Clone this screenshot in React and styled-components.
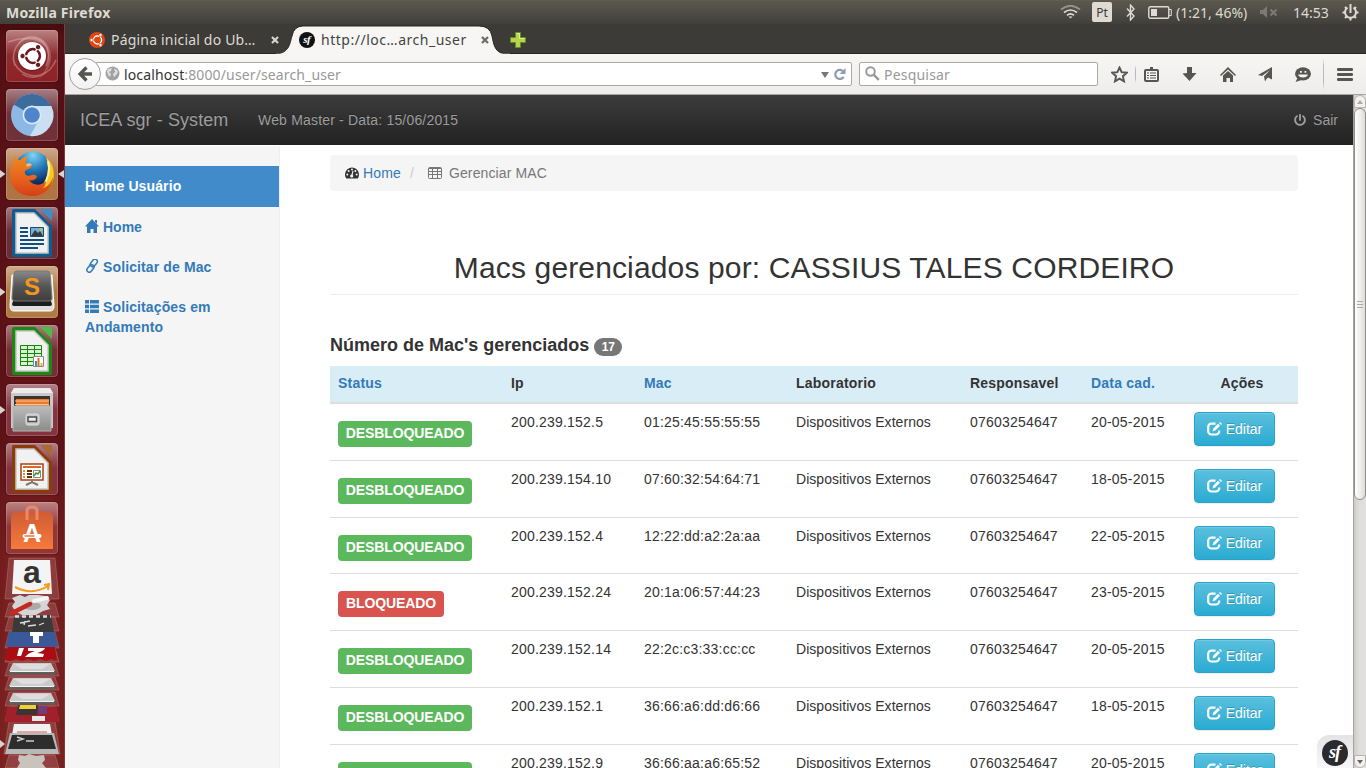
import React from "react";
import styled, { createGlobalStyle } from "styled-components";
import { FaPowerOff } from "react-icons/fa";

const GlobalStyle = createGlobalStyle`
  * { box-sizing: border-box; }
  body { margin: 0; overflow: hidden; background: #fff; }
`;

const uiFont = `"Noto Sans", "Open Sans", sans-serif`;
const pageFont = `"Liberation Sans", Arial, sans-serif`;

const Desktop = styled.div`
  width: 1366px;
  height: 768px;
  overflow: hidden;
  display: flex;
  flex-direction: column;
  font-family: ${uiFont};
`;
const Label = styled.span`
  letter-spacing: ${(p) => p.$ls || 0}px;
  white-space: nowrap;
`;

/* ---------- top panel ---------- */
const Panel = styled.header`
  flex: none;
  height: 24px;
  display: flex;
  align-items: center;
  padding: 0 7px 0 6px;
  color: #dfdbd2;
  font-size: 14px;
  background: linear-gradient(#65624f 0, #5a584e 1px, #504e46 11px, #403f3a 24px);
  svg { flex: none; display: block; }
`;
const PanelTitle = styled.div`
  flex: 1;
  font-weight: 700;
  font-size: 14px;
`;
const Lang = styled.div`
  width: 20px;
  height: 20px;
  margin: 0 14px 0 11px;
  border-radius: 2px;
  background: #dfdbd2;
  color: #3c3b37;
  font-size: 12px;
  line-height: 21px;
  text-align: center;
`;
const Battery = styled.div`
  display: flex;
  align-items: center;
  gap: 4px;
  width: 101px;
  margin: 0 11px 0 13px;
`;
const Clock = styled.div`
  width: 36px;
  margin: 0 13px 0 15px;
`;

/* ---------- launcher ---------- */
const Body = styled.div`
  flex: 1;
  min-height: 0;
  display: flex;
`;
const Launcher = styled.nav`
  flex: none;
  width: 65px;
  height: 744px;
  overflow: hidden;
  display: flex;
  flex-direction: column;
  gap: 7px;
  padding-top: 6px;
  border-right: 1px solid #823c40;
  background: linear-gradient(90deg, rgba(40, 0, 0, .12), transparent 20%, transparent 80%, rgba(40, 0, 0, .15)),
    linear-gradient(#4a0b0f 0, #5b1116 14px, #5d1218 120px, #641419 420px, #7d2020 540px, #842524 744px);
`;
const Slot = styled.div`
  flex: none;
  display: flex;
  align-items: center;
  justify-content: space-between;
  height: 52px;
`;
const Pip = styled.i`
  width: 6px;
  height: 8px;
  background: ${(p) => (p.$on ? "#d8d4d2" : "transparent")};
  clip-path: ${(p) => (p.$right ? "polygon(100% 0, 0 50%, 100% 100%)" : "polygon(0 0, 90% 50%, 0 100%)")};
`;
const Tile = styled.div`
  width: 52px;
  height: 52px;
  border-radius: 4px;
  background: linear-gradient(rgba(255, 255, 255, .38), rgba(255, 255, 255, 0) 48%), ${(p) => p.$bg};
  box-shadow: inset 0 0 0 1px rgba(255, 255, 255, .18), 0 0 2px rgba(0, 0, 0, .5);
  svg { display: block; }
`;
const Folded = styled.div`
  flex: none;
  margin-top: -5px;
  svg { display: block; overflow: visible; }
`;

/* ---------- firefox ---------- */
const Browser = styled.div`
  flex: 1;
  min-width: 0;
  display: flex;
  flex-direction: column;
`;
const TabStrip = styled.div`
  flex: none;
  height: 30px;
  display: flex;
  background: #3c3b37;
  border-bottom: 1px solid #282723;
  font-size: 14px;
`;
const Tab = styled.div`
  position: relative;
  z-index: ${(p) => (p.$active ? 1 : 0)};
  display: flex;
  align-items: center;
  width: ${(p) => (p.$active ? "208px" : "217px")};
  height: 32px;
  padding-left: ${(p) => (p.$active ? "17px" : "24px")};
  color: ${(p) => (p.$active ? "#45443f" : "#dddad3")};
`;
const TabShape = styled.svg`
  position: absolute;
  left: -6px;
  top: 0;
  z-index: -1;
`;
const TabText = styled.div`
  width: ${(p) => p.$w}px;
  margin: -1px ${(p) => p.$gap}px 0 6px;
  white-space: nowrap;
`;
const NewTab = styled.div`
  padding: 8px 0 0 20px;
`;
const Toolbar = styled.div`
  flex: none;
  height: 41px;
  display: flex;
  align-items: center;
  padding-left: 4px;
  background: linear-gradient(#f7f6f5, #efedeb);
  border-bottom: 1px solid #a8a5a0;
  color: #999;
  font-size: 14px;
  svg { flex: none; display: block; }
`;
const BackButton = styled.div`
  flex: none;
  z-index: 1;
  display: grid;
  place-items: center;
  width: 32px;
  height: 32px;
  border: 1px solid #9aa0a8;
  border-radius: 50%;
  background: linear-gradient(#fff, #f3f2f1);
`;
const Field = styled.div`
  flex: none;
  display: flex;
  align-items: center;
  width: ${(p) => p.$w}px;
  height: 24px;
  margin-left: ${(p) => p.$ml}px;
  padding: 0 ${(p) => p.$pr || 0}px 1px ${(p) => p.$pl}px;
  border: 1px solid #aaa8a3;
  border-radius: 2px;
  background: #fff;
`;
const Address = styled.div`
  flex: 1;
  margin: 2px 0 0 4px;
  b { font-weight: 400; color: #333; }
`;
const Tools = styled.div`
  display: flex;
  align-items: center;
  padding-left: 13px;
`;
const Divider = styled.i`
  width: 1px;
  height: ${(p) => p.$h}px;
  margin: 0 ${(p) => p.$r}px 0 ${(p) => p.$l}px;
  background: linear-gradient(transparent, #b3bac2 25%, #b3bac2 75%, transparent);
`;

/* ---------- web page ---------- */
const Viewport = styled.div`
  flex: 1;
  min-height: 0;
  display: flex;
`;
const Page = styled.div`
  width: 1288px;
  height: 673px;
  overflow: hidden;
  position: relative;
  display: flex;
  flex-direction: column;
  background: #fff;
  color: #333;
  font: 14px/20px ${pageFont};
`;
const Navbar = styled.div`
  flex: none;
  height: 50px;
  display: flex;
  align-items: center;
  padding: 0 15px;
  color: #9d9d9d;
  background: linear-gradient(#3c3c3c, #222);
  text-shadow: 0 -1px 0 rgba(0, 0, 0, .25);
`;
const Brand = styled.div`
  width: 178px;
  font-size: 18px;
  white-space: nowrap;
`;
const NavText = styled.div`
  flex: 1;
`;
const Logout = styled.div`
  display: flex;
  align-items: center;
  gap: 7px;
`;
const Columns = styled.div`
  flex: 1;
  min-height: 0;
  display: flex;
`;
const Sidebar = styled.aside`
  flex: none;
  width: 215px;
  margin-top: 1px;
  padding-top: 20px;
  background: #f5f5f5;
  border-right: 1px solid #eee;
`;
const SideItem = styled.div`
  padding: ${(p) => (p.$active ? "10px 20px 11px" : "10px 20px")};
  font-weight: 700;
  letter-spacing: ${(p) => p.$ls ?? 0.12}px;
  color: ${(p) => (p.$active ? "#fff" : "#337ab7")};
  background: ${(p) => (p.$active ? "#428bca" : "transparent")};
  svg { vertical-align: -1px; margin-right: 4px; }
  span { letter-spacing: inherit; }
`;
const Main = styled.main`
  flex: none;
  width: 968px;
  margin-left: 50px;
  padding-top: 10px;
`;
const Breadcrumb = styled.div`
  display: flex;
  align-items: center;
  height: 36px;
  padding: 0 15px;
  border-radius: 4px;
  background: #f5f5f5;
  color: #777;
  letter-spacing: .13px;
  a { color: #337ab7; margin-left: 4px; }
  i { color: #ccc; font-style: normal; margin: 0 14px 0 9px; }
  svg + span { margin-left: 7px; }
`;
const Title = styled.h2`
  margin: 58px 0 0;
  height: 46px;
  padding-top: 2px;
  border-bottom: 1px solid #eee;
  font-size: 30px;
  font-weight: 400;
  line-height: 33px;
  text-align: center;
  white-space: nowrap;
`;
const Subtitle = styled.h4`
  display: flex;
  align-items: center;
  height: 20px;
  margin: 40px 0 11px;
  font-size: 18px;
  line-height: 20px;
`;
const Count = styled.span`
  width: 28px;
  height: 18px;
  margin: 4px 0 0 5px;
  border-radius: 9px;
  background: #777;
  color: #fff;
  font-size: 12px;
  line-height: 18px;
  text-align: center;
`;
const Row = styled.div`
  display: grid;
  grid-template-columns: 173px 133px 152px 174px 121px 103px 112px;
  height: ${(p) => (p.$first ? 56.8 : 56.75)}px;
  padding-top: 8px;
  border-bottom: 1px solid #ddd;
`;
const HeadRow = styled(Row)`
  height: 38px;
  padding-top: 7px;
  background: #d9edf7;
  border-bottom: 2px solid #ddd;
  font-weight: 700;
`;
const Cell = styled.div`
  padding: 0 8px;
  white-space: nowrap;
  letter-spacing: ${(p) => p.$ls ?? 0.2}px;
  text-align: ${(p) => (p.$center ? "center" : "left")};
  color: ${(p) => (p.$link ? "#337ab7" : "#333")};
`;
const Status = styled.span`
  display: block;
  width: ${(p) => (p.$blocked ? 106 : 134)}px;
  height: 26px;
  margin-top: 9px;
  border-radius: 4px;
  background: ${(p) => (p.$blocked ? "#d9534f" : "#5cb85c")};
  color: #fff;
  font-weight: 700;
  letter-spacing: -.12px;
  line-height: 24px;
  text-align: center;
`;
const EditButton = styled.span`
  display: flex;
  align-items: center;
  justify-content: center;
  gap: 4px;
  width: 81px;
  height: 34px;
  border: 1px solid #28a4c9;
  border-radius: 4px;
  background: linear-gradient(#5bc0de, #2aabd2);
  box-shadow: inset 0 1px 0 rgba(255, 255, 255, .15), 0 1px 1px rgba(0, 0, 0, .075);
  color: #fff;
  text-shadow: 0 -1px 0 rgba(0, 0, 0, .2);
`;
const DebugBadge = styled.div`
  position: absolute;
  right: 0;
  bottom: 0;
  width: 36px;
  height: 33px;
  padding: 5px 0 0 5px;
  border-radius: 12px 0 0 0;
  background: linear-gradient(#e4e4e4, #f7f7f7);
  svg { display: block; }
`;
const Scrollbar = styled.div`
  flex: none;
  width: 13px;
  height: 673px;
  display: flex;
  flex-direction: column;
  background: linear-gradient(90deg, #cdcbc9, #dedddb 40%, #e2e0de);
  border-left: 1px solid #a6a39f;
`;
const Arrow = styled.div`
  display: grid;
  place-items: center;
  height: 13px;
  border: 1px solid #b8b5b1;
  border-radius: ${(p) => (p.$down ? "0 0 6px 6px" : "6px 6px 0 0")};
  background: #f2f1f0;
`;
const Thumb = styled.div`
  display: grid;
  place-items: center;
  height: 392px;
  border: 1px solid #918e8a;
  border-radius: 6px;
  background: linear-gradient(90deg, #fff, #f0efee 50%, #dedcda);
`;
const Trough = styled.div`
  flex: 1;
`;

/* ---------- drawings ---------- */
const Ubuntu = ({ size, color, ring, cut }) => (
  <svg width={size} height={size} viewBox="0 0 24 24">
    <circle cx="12" cy="12" r="12" fill={color} />
    <circle cx="12.800" cy="12" r="5.900" fill="none" stroke={ring} strokeWidth="2.300" />
    <path d="M12.800 12H2M12.800 12l5.500 9.500M12.800 12l5.500-9.500" stroke={color} strokeWidth="1.200" />
    <circle cx="12.800" cy="12" r="4.700" fill={color} />
    {[[3.9, 12], [17.2, 19.6], [17.2, 4.4]].map(([x, y]) => (
      <circle key={x + "-" + y} cx={x} cy={y} r="2.300" fill={ring} stroke={cut} strokeWidth=".8" />
    ))}
  </svg>
);
const Symfony = ({ size, fill }) => (
  <svg width={size} height={size} viewBox="0 0 26 26">
    <circle cx="13" cy="13" r="13" fill={fill} />
    <text x="12.600" y="18" textAnchor="middle" fill="#fff" fontFamily="Liberation Serif, serif" fontStyle="italic" fontWeight="700" fontSize="18" letterSpacing="-1">sf</text>
  </svg>
);
const Close = ({ color }) => (
  <svg width="8" height="8" viewBox="0 0 8 8"><path d="M1 1l6 6M7 1L1 7" stroke={color} strokeWidth="2.200" /></svg>
);

const DashTile = () => (
  <svg width="52" height="52" viewBox="0 0 52 52">
    <path d="M12 14C17 2 38 2 44 20C48 34 40 44 30 51C44 40 46 22 36 12C28 6 18 8 12 14z" fill="#fff" opacity=".2" />
    <path d="M9 36C4 22 12 8 26 8C40 8 46 22 40 36M2 12C14 8 30 6 40 16M40 42C28 50 10 44 7 28M16 44c12 8 28 0 34-14" fill="none" stroke="#f3c9c9" strokeOpacity=".38" strokeWidth="1.500" />
    <circle cx="26" cy="26.500" r="15" fill="#3a0a0d" opacity=".3" />
    <g transform="translate(12 12)"><Ubuntu size={28} color="#fff" ring="#681a20" cut="#fff" /></g>
  </svg>
);
const ChromiumTile = () => (
  <svg width="52" height="52" viewBox="0 0 52 52">
    <circle cx="26" cy="26" r="21" fill="#8bb8e4" />
    <path d="M26 26L7.800 15.500A21 21 0 0 1 44.200 15.500L45.500 18H26z" fill="#3c6c9c" />
    <path d="M26 17h19.300A21 21 0 0 1 24 47l9.500-17z" fill="#cbdff3" />
    <circle cx="26" cy="26" r="9.500" fill="#dbe9f8" />
    <circle cx="26" cy="26" r="7.800" fill="#4f86cb" />
  </svg>
);
const FirefoxTile = () => (
  <svg width="52" height="52" viewBox="0 0 52 52">
    <defs>
      <radialGradient id="ffBlue" cx=".5" cy=".1" r=".8"><stop offset="0" stopColor="#7fd4f5" /><stop offset=".5" stopColor="#2379b8" /><stop offset="1" stopColor="#0a2458" /></radialGradient>
      <linearGradient id="ffFox" x1="0" y1="0" x2="0" y2="1"><stop offset="0" stopColor="#ee8a1d" /><stop offset=".6" stopColor="#e5601f" /><stop offset="1" stopColor="#d53f14" /></linearGradient>
    </defs>
    <circle cx="27" cy="22" r="18.500" fill="url(#ffBlue)" />
    <path d="M40 9C50 18 51 34 40 43L32 44C42 34 44 22 40 9z" fill="#f7c821" />
    <path d="M42 13c3 10-1 18-4 24" fill="none" stroke="#fff09a" strokeWidth="2" />
    <path d="M9 8C10 10 12 12 14 12C17 9 20 8 22 9C20 11 19 13 20 16C22 16 25 16 26 17C26 20 21 21 19 23C18 27 22 29 26 27C29 26 31 28 31 29C29 32 26 33 23 32C27 38 35 38 40 33C40 37 38 39 37 40C42 39 45 34 47 29C47 40 38 48 26 48C13 48 4 39 4 27C4 20 7 16 9 8z" fill="url(#ffFox)" />
    <path d="M20 16c2-1 5-1 6 1l-5 2z" fill="#f1b58c" />
  </svg>
);
const docColors = {
  writer: ["#0f5c90", "#3f8fc4"],
  calc: ["#1c8a12", "#4fb944"],
  impress: ["#8a3d0a", "#a86a36"],
};
const DocTile = ({ kind }) => (
  <svg width="52" height="52" viewBox="0 0 52 52">
    <path d="M6 4a2 2 0 0 1 2-2h21l17 17v29a2 2 0 0 1-2 2H8a2 2 0 0 1-2-2z" fill={docColors[kind][0]} />
    <path d="M10 6h18l14 14v26H10z" fill="#f2f1f1" stroke="#c6c6c6" strokeWidth="1.500" />
    <path d="M34 2h12v12z" fill={docColors[kind][1]} />
    {kind === "writer" && (
      <g>
        <path d="M14 21h8M14 25h8M14 29h8M14 33h24M14 37h24M14 41h18" stroke="#12507c" strokeWidth="2" />
        <path d="M24.500 20.500h13v9h-13z" fill="#6fb2e2" stroke="#184c70" />
        <path d="M25 29l4-6 3 3 2-2 3 5z" fill="#3a3a3a" /><circle cx="35" cy="22.500" r="1.500" fill="#e9b928" />
      </g>
    )}
    {kind === "calc" && (
      <g>
        <path d="M14.500 20.500h21v20h-21z" fill="#d5f3cf" stroke="#1a8010" />
        <path d="M14 24.500h21M14 28.500h21M14 32.500h21M14 36.500h21M21.500 20v21M28.500 20v21" stroke="#1a8010" />
        <path d="M27.500 31.500h10v10h-10z" fill="#fff" stroke="#888" />
        <path d="M29 41v-5h2v5z" fill="#2a91dd" /><path d="M31.500 41v-8h2v8z" fill="#dd6a1e" /><path d="M34.500 41v-3h2v3z" fill="#e8b41c" />
      </g>
    )}
    {kind === "impress" && (
      <g>
        <path d="M15 21h22v16H15z" fill="#fff" stroke="#a34410" strokeWidth="1.500" />
        <path d="M17 24h18" stroke="#d96a28" strokeWidth="2" />
        <path d="M17 28h2M17 31h2M17 34h2" stroke="#e28a4a" strokeWidth="2" />
        <path d="M21 28h5M21 31h5M21 34h5" stroke="#6e2c08" strokeWidth="2" />
        <path d="M27.500 27.500h7v7h-7z" fill="#fff" stroke="#888" /><path d="M28 33l2-3 2 1 2-3" fill="none" stroke="#3c9b2c" strokeWidth="1.500" />
        <path d="M26 38v2M20 42l6-3 6 3" stroke="#777" strokeWidth="2" fill="none" />
      </g>
    )}
  </svg>
);
const SublimeTile = () => (
  <svg width="52" height="52" viewBox="0 0 52 52">
    <defs><linearGradient id="subKey" x1="0" y1="0" x2="0" y2="1"><stop offset="0" stopColor="#8a8a8a" /><stop offset=".5" stopColor="#555" /><stop offset="1" stopColor="#3e3e3e" /></linearGradient></defs>
    <path d="M6 9l-2 31q0 5 4 5h36q4 0 4-5L46 9z" fill="#dedede" stroke="#fff" />
    <path d="M8 33l-2 5q0 2 2 2h36q2 0 2-2l-2-5z" fill="#1d1d1d" />
    <path d="M11 5h30q3 0 3 3l2 24q0 3-3 3H9q-3 0-3-3L8 8q0-3 3-3z" fill="url(#subKey)" stroke="#777" />
    <text x="26" y="28.500" textAnchor="middle" fill="#f8951d" fontFamily="Liberation Sans, sans-serif" fontWeight="700" fontSize="24">S</text>
  </svg>
);
const FilesTile = () => (
  <svg width="52" height="52" viewBox="0 0 52 52">
    <defs><linearGradient id="cabinet" x1="0" y1="0" x2="0" y2="1"><stop offset="0" stopColor="#bcbcbc" /><stop offset="1" stopColor="#8b8b8b" /></linearGradient></defs>
    <path d="M8 4h36l3 5v35H5V9z" fill="#c9c9c9" />
    <path d="M8 4h36l3 5H5z" fill="#ececec" />
    <path d="M8 12h36v12H8z" fill="#3a3432" />
    <path d="M10 15h33v8H10z" fill="#e8792d" /><path d="M9 17h34M9 20.500h34" stroke="#f8c58d" />
    <path d="M7 22h38v25H7z" fill="url(#cabinet)" stroke="#b5b5b5" />
    <rect x="20" y="30" width="13" height="11" rx="2" fill="#c9c9c9" stroke="#ddd" /><path d="M22 33h8.500v4.500H22z" fill="#eee" stroke="#4d4d4d" strokeWidth="1.500" />
  </svg>
);
const SoftwareTile = () => (
  <svg width="52" height="52" viewBox="0 0 52 52">
    <defs><linearGradient id="bag" x1="0" y1="0" x2="0" y2="1"><stop offset="0" stopColor="#d05c34" /><stop offset="1" stopColor="#f47a3c" /></linearGradient></defs>
    <path d="M5 14l3-4h36l3 4v33H5z" fill="url(#bag)" />
    <path d="M21 18V9q0-4 5-4t5 4v9" fill="none" stroke="#ef8863" strokeWidth="3" />
    <text x="26" y="40" textAnchor="middle" fill="#fff" fontFamily="Liberation Sans, sans-serif" fontWeight="700" fontSize="25">A</text>
    <path d="M18.500 34h15" stroke="#fff" strokeWidth="4" strokeLinecap="round" /><path d="M18.500 34h10" stroke="#f0743b" strokeWidth="1.500" />
  </svg>
);
const FoldedStack = () => (
  <svg width="64" height="212" viewBox="0 0 64 212">
    <g fill="#fff" fillOpacity=".13" stroke="#fff" strokeOpacity=".18">
      <path d="M9 2h46l4 41H5zM9 47h46l4 14H5zM9 61h46l4 14H5zM9 76h46l4 16H5zM9 92h46l4 14H5zM9 107h46l4 13H5zM9 121h46l4 13H5zM9 136h46l4 14H5zM9 151h46l4 14H5zM9 165h46l5 33H4zM9 199h46l4 13H5z" />
    </g>
    <path d="M14 4h36l2 34H12z" fill="#f4f4f4" />
    <text x="32" y="27" textAnchor="middle" fill="#333" fontFamily="Liberation Sans, sans-serif" fontWeight="700" fontSize="32">a</text>
    <path d="M15 31q17 9 33-1m-4-1l5-1-1 6" fill="none" stroke="#f59a20" strokeWidth="2" />
    <path d="M12 42l8-3 5 2 4-2h9l7 1 5 4-3 5 3 4-7 2-7 4H22l-7-4-3-5 3-4z" fill="#d5d5d5" /><ellipse cx="32" cy="50" rx="9" ry="4" fill="#aaa" />
    <path d="M12 57L30 48" stroke="#c52a22" strokeWidth="4.500" strokeLinecap="round" /><path d="M34 45l13-3" stroke="#f4f4f4" strokeWidth="4" strokeLinecap="round" />
    <path d="M14 61l37-2 3 17H12z" fill="#3a3a3a" /><path d="M15 60.500h36" stroke="#ddd" strokeWidth="2.500" strokeDasharray="4 3" /><path d="M20 67l10-2m-5 0l-1 4m4 1l8-1m3 0l5-2" fill="none" stroke="#ddd" strokeWidth="1.300" />
    <path d="M9 76h46l3 15H6z" fill="#3a5998" /><path d="M30 76h13v4h-4v7h-6v-7h-3z" fill="#fff" />
    <path d="M8 91h47l2 14-6-2-5 2-6-2-6 2-6-2-6 2-6-2-5 2-6-1z" fill="#ac0d12" />
    <path d="M19 92h5l-3 8h-4zM28 92h17q-1 3-8 5l7 1-1 3H25q3-4 10-6h-7z" fill="#fff" />
    {[107, 122, 137].map((y) => (
      <g key={y}><path d={`M13 ${y}h38l4 8H9z`} fill="#cbcbcb" /><path d={`M14 ${y + 1}h36l-8 5H22z`} fill="#dedede" /><path d={`M9 ${y + 8}h46v3.500H9z`} fill="#5e5e5e" /><path d={`M10 ${y + 8.500}h44`} stroke="#f4f4f4" /></g>
    ))}
    <path d="M7 151h50l2 15H5z" fill="#a21f2c" />
    <path d="M18 149h20l-1 10H16z" fill="#3b3434" /><path d="M20 149h16v4H19z" fill="#e5d43c" /><path d="M38 150h9v8h-8z" fill="#6e3f78" /><path d="M32 160h13v5H32z" fill="#e6e6e6" />
    <path d="M14 168h36l2 11H12z" fill="#f1f1f1" /><path d="M17 176h30" stroke="#d85a4a" />
    <path d="M10 177h44l5 21H5z" fill="#b8b8b8" /><path d="M12 179h40l4 14H8z" fill="#2d2d2d" /><path d="M17 181l6 2-6 2m9 0h8" fill="none" stroke="#ccc" strokeWidth="1.500" />
    <path d="M19 199l6 1 4-2 7 2 8-1 1 5-3 3 4 5H17l3-5-2-3z" fill="#c9c4bb" />
    <path d="M0 184l5 4-5 4z" fill="#d8d4d2" />
  </svg>
);

const apps = [
  { icon: <DashTile />, bg: "linear-gradient(#903538, #8d2226)" },
  { icon: <ChromiumTile />, bg: "#703139" },
  { icon: <FirefoxTile />, bg: "#b07443", left: true, right: true },
  { icon: <DocTile kind="writer" />, bg: "#6c2c38" },
  { icon: <SublimeTile />, bg: "#b07b43", left: true },
  { icon: <DocTile kind="calc" />, bg: "#772d37" },
  { icon: <FilesTile />, bg: "#85343f", left: true },
  { icon: <DocTile kind="impress" />, bg: "#84333c" },
  { icon: <SoftwareTile />, bg: "#923735" },
];

const EditIcon = () => (
  <svg width="15" height="14" viewBox="0 0 15 14">
    <path d="M8.500 1.600H4.500A3.300 3.300 0 0 0 1.200 4.900v4.300A3.300 3.300 0 0 0 4.500 12.500h4.400a3.300 3.300 0 0 0 3.300-3.300V8.500" fill="none" stroke="#fff" strokeWidth="2.200" />
    <path d="M5.500 9.500l.8-3L11 1.800l2 2-4.700 4.700z" fill="#fff" /><path d="M12 1l1-1 2 2-1 1z" fill="#fff" />
  </svg>
);
const GaugeIcon = () => (
  <svg width="14" height="12" viewBox="0 0 14 12">
    <path d="M1.200 11.500A7 7 0 1 1 12.800 11.500z" fill="#333" />
    <g fill="#f5f5f5"><circle cx="2.300" cy="7.500" r="1" /><circle cx="3.700" cy="4" r="1" /><circle cx="7" cy="2.500" r="1" /><circle cx="10.300" cy="4" r="1" /><circle cx="11.700" cy="7.500" r="1" /><circle cx="6.700" cy="9" r="1.600" /></g>
    <path d="M6.700 9l1.300-5" stroke="#f5f5f5" strokeWidth="1.100" />
  </svg>
);

const rows = [
  ["200.239.152.5", "01:25:45:55:55:55", "20-05-2015"],
  ["200.239.154.10", "07:60:32:54:64:71", "18-05-2015"],
  ["200.239.152.4", "12:22:dd:a2:2a:aa", "22-05-2015"],
  ["200.239.152.24", "20:1a:06:57:44:23", "23-05-2015", true],
  ["200.239.152.14", "22:2c:c3:33:cc:cc", "20-05-2015"],
  ["200.239.152.1", "36:66:a6:dd:d6:66", "18-05-2015"],
  ["200.239.152.9", "36:66:aa:a6:65:52", "20-05-2015"],
];

function TopPanel() {
  return (
    <Panel>
      <PanelTitle><Label $ls={0.2}>Mozilla Firefox</Label></PanelTitle>
      <svg width="21" height="14" viewBox="0 0 21 14" fill="none" stroke="#dfdbd2" strokeWidth="1.700">
        <path d="M1 4.500Q10.500-3 20 4.500" stroke="#96938b" /><path d="M4 7.500q6.500-5 13 0M7 10.300q3.500-2.700 7 0" /><path d="M8.500 11.500h4l-2 2z" fill="#dfdbd2" stroke="none" />
      </svg>
      <Lang>Pt</Lang>
      <svg width="9" height="17" viewBox="0 0 9 17"><path d="M1 4.500l7 7.500-3.500 4V1L8 5l-7 7.500" fill="none" stroke="#dfdbd2" strokeWidth="1.400" /></svg>
      <Battery>
        <svg width="24" height="13" viewBox="0 0 24 13"><rect x=".8" y=".8" width="20" height="11.400" rx="1.500" fill="none" stroke="#dfdbd2" strokeWidth="1.400" /><path d="M3 3h6v7H3z" fill="#dfdbd2" /><path d="M21 3.500h2.300v6H21" fill="none" stroke="#dfdbd2" /></svg>
        <Label>(1:21, 46%)</Label>
      </Battery>
      <svg width="18" height="12" viewBox="0 0 18 12"><path d="M0 4h3l4-4v12L3 8H0z" fill="#7d7a72" /><path d="M10.500 3.500l6 6M16.500 3.500l-6 6" stroke="#7d7a72" strokeWidth="2" /></svg>
      <Clock><Label $ls={0}>14:53</Label></Clock>
      <svg width="17" height="17" viewBox="0 0 17 17" fill="none" stroke="#dfdbd2">
        <path d="M5.500 3.600a5.500 5.500 0 1 0 6 0" strokeWidth="2" /><path d="M8.500 0v9" strokeWidth="2" />
        <path d="M3.500 8.500H.5M16.500 8.500h-3M8.500 13.500v3M5 12l-2 2M12 12l2 2M4.800 4.800L3 3M12.200 4.800L14 3" strokeWidth="2" />
      </svg>
    </Panel>
  );
}

function Chrome() {
  const ink = "#555552";
  return (
    <>
      <TabStrip>
        <Tab>
          <Ubuntu size={16} color="#dd4814" ring="#fff" cut="#dd4814" />
          <TabText $w={144} $gap={16}><Label $ls={0.19}>Página inicial do Ub…</Label></TabText>
          <Close color="#d8d5ce" />
        </Tab>
        <Tab $active>
          <TabShape width="237" height="31" viewBox="0 0 237 31">
            <path d="M0 30C14 29 14 18 16 12Q18 2 27 2H203Q214 2 216 12C218 22 219 30 232 30V31H0z" fill="#f7f6f5" stroke="#282723" strokeWidth="1" />
            <path d="M0 30.500h234" stroke="#f7f6f5" strokeWidth="1.500" />
          </TabShape>
          <Symfony size={16} fill="#111" />
          <TabText $w={145} $gap={15}><Label $ls={0.52}>http://loc…arch_user</Label></TabText>
          <Close color="#6c6b67" />
        </Tab>
        <NewTab>
          <svg width="16" height="16" viewBox="0 0 16 16"><path d="M5.500.5h5v5h5v5h-5v5h-5v-5h-5v-5h5z" fill="#b9d24b" stroke="#5f8f24" /><path d="M6.500 1.500h3v5h5" fill="none" stroke="#e0ee9a" /></svg>
        </NewTab>
      </TabStrip>
      <Toolbar>
        <BackButton>
          <svg width="15" height="16" viewBox="0 0 15 16"><path d="M8.500 1.500L2 8l6.500 6.500M2.500 8H14" fill="none" stroke="#555552" strokeWidth="3.300" /></svg>
        </BackButton>
        <Field $w={757} $ml={-6} $pl={9} $pr={4}>
          <svg width="15" height="15" viewBox="0 0 15 15"><circle cx="7.500" cy="7.500" r="7" fill="#a2a2a2" /><path d="M3 3l4-1-1 3-2 1 2 2-1 3-2-2-1-4zM9 2l4 3-1 3-3 3-1-3 2-2z" fill="#dedede" /></svg>
          <Address><Label $ls={0.13}><b>localhost</b>:8000/user/search_user</Label></Address>
          <svg width="26" height="14" viewBox="0 0 26 14"><path d="M0 5h8l-4 6z" fill="#777" /><path d="M22 4.300a4.500 4.500 0 1 0 .6 5.500" fill="none" stroke="#8d9cb0" strokeWidth="2.200" /><path d="M24.500 1v6h-6z" fill="#8d9cb0" /></svg>
        </Field>
        <Field $w={239} $ml={7} $pl={5}>
          <svg width="15" height="15" viewBox="0 0 15 15"><circle cx="5.500" cy="5.500" r="4.300" fill="none" stroke="#999" strokeWidth="2" /><path d="M8.800 8.800l5 5" stroke="#999" strokeWidth="2.500" /></svg>
          <Address><Label $ls={0.2}>Pesquisar</Label></Address>
        </Field>
        <Tools>
          <svg width="17" height="17" viewBox="0 0 17 17"><path d="M8.500 1.500l2.100 4.700 5.200.5-3.900 3.500 1.100 5.100-4.500-2.700L4 15.300l1.100-5.100-3.900-3.500 5.200-.5z" fill="none" stroke={ink} strokeWidth="1.900" /></svg>
          <Divider $h={18} $l={7} $r={8} />
          <svg width="15" height="15" viewBox="0 0 15 15"><path d="M4 3V2h2V0h3v2h2v1z" fill={ink} /><rect x="1" y="3" width="13" height="11" rx="1" fill="#f5f5f5" stroke={ink} strokeWidth="2" /><path d="M3 6h2M3 8.500h2M3 11h2M6 6h6M6 8.500h6M6 11h6" stroke={ink} strokeWidth="1.200" /></svg>
          <Divider $h={0} $l={11} $r={11} />
          <svg width="15" height="15" viewBox="0 0 15 15"><path d="M5 0h5v6h4.500L7.500 14 .5 6.500 5 6z" fill={ink} /></svg>
          <Divider $h={0} $l={11} $r={11} />
          <svg width="16" height="15" viewBox="0 0 16 15"><path d="M0 8l8-8 8 8-1 1-7-6.500L1 9z" fill={ink} /><path d="M3 8.500L8 4l5 4.500V15h-3v-4H6.500v4H3z" fill={ink} /></svg>
          <Divider $h={0} $l={11} $r={10} />
          <svg width="14" height="15" viewBox="0 0 14 15"><path d="M14 0v12.500l-4-2L8.500 12 7 14.500 6 9.500 12 3 4 9 0 8z" fill={ink} /></svg>
          <Divider $h={0} $l={11} $r={11} />
          <svg width="16" height="15" viewBox="0 0 16 15"><ellipse cx="8" cy="6.800" rx="8" ry="6.600" fill={ink} /><path d="M3 10l-2.500 5 6-2z" fill={ink} /><path d="M5 4.800h1.800M9.500 4.800h1.800" stroke="#f5f5f5" strokeWidth="1.800" /><path d="M3 7.500h10q-1 3-5 3t-5-3z" fill="#f5f5f5" /></svg>
          <Divider $h={32} $l={12} $r={13} />
          <svg width="16" height="13" viewBox="0 0 16 13"><path d="M1.200 1.500h13.600M1.200 6.500h13.600M1.200 11.500h13.600" stroke={ink} strokeWidth="2.800" strokeLinecap="round" /></svg>
        </Tools>
      </Toolbar>
    </>
  );
}

function WebPage() {
  return (
    <Page>
      <Navbar>
        <Brand><Label $ls={0.08}>ICEA sgr - System</Label></Brand>
        <NavText><Label $ls={0.18}>Web Master - Data: 15/06/2015</Label></NavText>
        <Logout><FaPowerOff size={12} /><Label>Sair</Label></Logout>
      </Navbar>
      <Columns>
        <Sidebar>
          <SideItem $active><Label>Home Usuário</Label></SideItem>
          <SideItem $ls={0}>
            <svg width="14" height="14" viewBox="0 0 14 14"><path d="M7 0l7 7.500h-2V14H8.500v-4h-3v4H2V7.500H0z" fill="currentColor" /><path d="M10 1h2v4l-2-2z" fill="currentColor" /></svg>
            <Label>Home</Label>
          </SideItem>
          <SideItem>
            <svg width="14" height="14" viewBox="0 0 14 14" fill="none" stroke="currentColor" strokeWidth="1.500"><rect x="5.600" y="-.2" width="4.800" height="8.400" rx="2.400" transform="rotate(38 8 4) translate(.6 -.6)" /><rect x="3" y="5.800" width="4.800" height="8.400" rx="2.400" transform="rotate(38 5.500 10) translate(-.3 -.4)" /></svg>
            <Label>Solicitar de Mac</Label>
          </SideItem>
          <SideItem>
            <svg width="14" height="13" viewBox="0 0 14 13"><path d="M0 0h4v3.500H0zM5 0h9v3.500H5zM0 4.700h4v3.500H0zM5 4.700h9v3.500H5zM0 9.500h4V13H0zM5 9.500h9V13H5z" fill="currentColor" /></svg>
            Solicitações em Andamento
          </SideItem>
        </Sidebar>
        <Main>
          <Breadcrumb>
            <GaugeIcon />
            <a>Home</a><i>/</i>
            <svg width="14" height="12" viewBox="0 0 14 12"><rect x=".5" y=".5" width="13" height="11" rx="1" fill="none" stroke="#777" /><path d="M1 1.500h12M1 4.500h12M1 7.500h12M4.500 2v9M9.500 2v9" stroke="#777" /></svg>
            <span>Gerenciar MAC</span>
          </Breadcrumb>
          <Title><Label $ls={0.14}>Macs gerenciados por: CASSIUS TALES CORDEIRO</Label></Title>
          <Subtitle><Label>Número de Mac's gerenciados</Label><Count>17</Count></Subtitle>
          <HeadRow>
            <Cell $link>Status</Cell><Cell>Ip</Cell><Cell $link>Mac</Cell><Cell>Laboratorio</Cell>
            <Cell>Responsavel</Cell><Cell $link>Data cad.</Cell><Cell $center>Ações</Cell>
          </HeadRow>
          {rows.map(([ip, mac, date, blocked], i) => (
            <Row key={ip} $first={i === 0}>
              <Cell><Status $blocked={blocked}>{blocked ? "BLOQUEADO" : "DESBLOQUEADO"}</Status></Cell>
              <Cell>{ip}</Cell>
              <Cell>{mac}</Cell>
              <Cell $ls={0.05}>Dispositivos Externos</Cell>
              <Cell>07603254647</Cell>
              <Cell>{date}</Cell>
              <Cell $ls={0}><EditButton><EditIcon /><Label>Editar</Label></EditButton></Cell>
            </Row>
          ))}
        </Main>
      </Columns>
      <DebugBadge><Symfony size={26} fill="#2b2a2f" /></DebugBadge>
    </Page>
  );
}

export default function App() {
  return (
    <Desktop>
      <GlobalStyle />
      <TopPanel />
      <Body>
        <Launcher>
          {apps.map((a, i) => (
            <Slot key={i}>
              <Pip $on={a.left} />
              <Tile $bg={a.bg}>{a.icon}</Tile>
              <Pip $on={a.right} $right />
            </Slot>
          ))}
          <Folded><FoldedStack /></Folded>
        </Launcher>
        <Browser>
          <Chrome />
          <Viewport>
            <WebPage />
            <Scrollbar>
              <Arrow><svg width="6" height="4"><path d="M0 4l3-4 3 4z" fill="#aaa" /></svg></Arrow>
              <Thumb><svg width="6" height="7"><path d="M0 .5h6M0 3.500h6M0 6.500h6" stroke="#aaa" /></svg></Thumb>
              <Trough />
              <Arrow $down><svg width="6" height="4"><path d="M0 0h6L3 4z" fill="#666" /></svg></Arrow>
            </Scrollbar>
          </Viewport>
        </Browser>
      </Body>
    </Desktop>
  );
}
